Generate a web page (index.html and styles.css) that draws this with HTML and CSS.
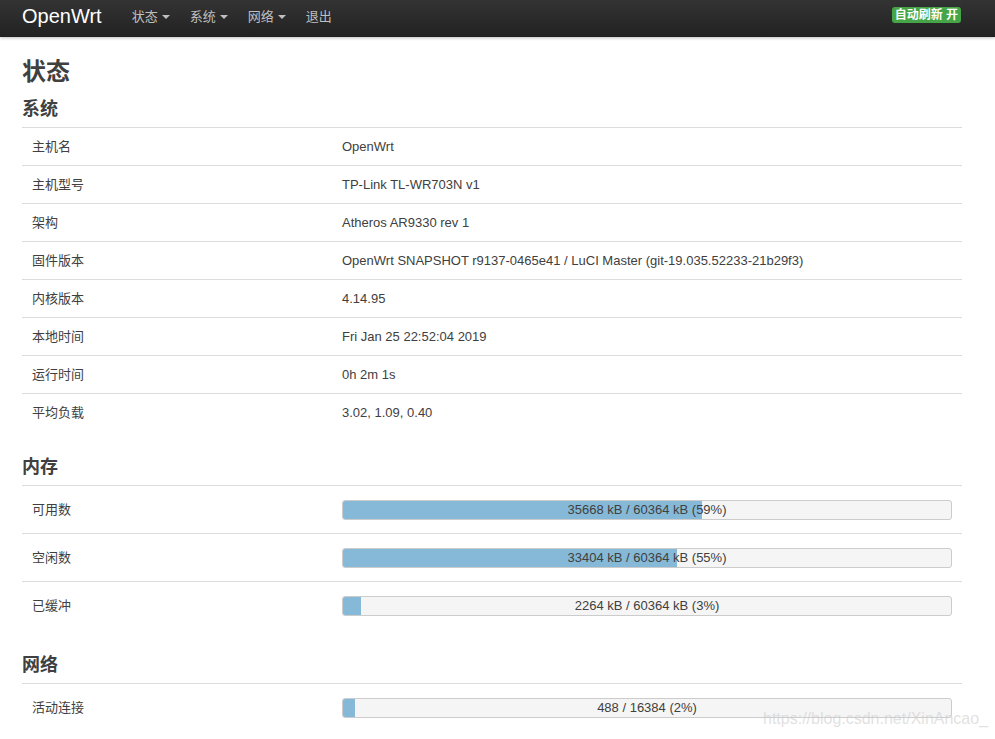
FILE: index.html
```html
<!DOCTYPE html>
<html lang="zh">
<head>
<meta charset="utf-8">
<title>OpenWrt - 状态</title>
<link rel="stylesheet" href="styles.css">
</head>
<body>
<header class="navbar">
  <div class="navbar-inner">
    <a class="brand" href="#">OpenWrt</a>
    <ul class="nav">
      <li><a href="#">状态<span class="caret"></span></a></li>
      <li><a href="#">系统<span class="caret"></span></a></li>
      <li><a href="#">网络<span class="caret"></span></a></li>
      <li><a href="#">退出</a></li>
    </ul>
    <span class="badge">自动刷新 开</span>
  </div>
</header>
<main class="main">
  <h1>状态</h1>
  <h2>系统</h2>
  <table class="info">
    <tr><td class="label">主机名</td><td>OpenWrt</td></tr>
    <tr><td class="label">主机型号</td><td>TP-Link TL-WR703N v1</td></tr>
    <tr><td class="label">架构</td><td>Atheros AR9330 rev 1</td></tr>
    <tr><td class="label">固件版本</td><td>OpenWrt SNAPSHOT r9137-0465e41 / LuCI Master (git-19.035.52233-21b29f3)</td></tr>
    <tr><td class="label">内核版本</td><td>4.14.95</td></tr>
    <tr><td class="label">本地时间</td><td>Fri Jan 25 22:52:04 2019</td></tr>
    <tr><td class="label">运行时间</td><td>0h 2m 1s</td></tr>
    <tr><td class="label">平均负载</td><td>3.02, 1.09, 0.40</td></tr>
  </table>
  <h2>内存</h2>
  <table class="info bars">
    <tr><td class="label">可用数</td><td><div class="progress"><div class="fill" style="width:59%"></div><span class="ptext">35668 kB / 60364 kB (59%)</span></div></td></tr>
    <tr><td class="label">空闲数</td><td><div class="progress"><div class="fill" style="width:55%"></div><span class="ptext">33404 kB / 60364 kB (55%)</span></div></td></tr>
    <tr><td class="label">已缓冲</td><td><div class="progress"><div class="fill" style="width:3%"></div><span class="ptext">2264 kB / 60364 kB (3%)</span></div></td></tr>
  </table>
  <h2>网络</h2>
  <table class="info bars">
    <tr><td class="label">活动连接</td><td><div class="progress"><div class="fill" style="width:2%"></div><span class="ptext">488 / 16384 (2%)</span></div></td></tr>
  </table>
</main>
<div class="watermark">https://blog.csdn.net/XinAncao_</div>
</body>
</html>
```
FILE: styles.css
```css
html, body {
  margin: 0;
  padding: 0;
  background: #fff;
}
body {
  font-family: "Liberation Sans", Arial, "Noto Sans CJK SC", sans-serif;
  font-size: 13px;
  line-height: 18px;
  color: #404040;
  overflow: hidden;
}
.navbar {
  height: 37px;
  background: linear-gradient(to bottom, #333333, #222222);
  box-shadow: 0 1px 3px rgba(0,0,0,0.25), inset 0 -1px 0 rgba(0,0,0,0.1);
}
.navbar-inner {
  width: 940px;
  margin-left: 22px;
  height: 33px;
  display: flex;
  align-items: center;
}
.brand {
  color: #ffffff;
  font-size: 20px;
  text-decoration: none;
  line-height: 28px;
  margin-right: 20px;
  margin-top: -2px;
}
.nav {
  list-style: none;
  margin: 0;
  padding: 0;
  display: flex;
}
.nav a {
  display: flex;
  align-items: center;
  padding: 0 10px;
  color: #bfbfbf;
  text-decoration: none;
  font-size: 13px;
  line-height: 30px;
}
.caret {
  display: inline-block;
  width: 0;
  height: 0;
  margin-left: 4px;
  margin-top: 1px;
  border-left: 4px solid transparent;
  border-right: 4px solid transparent;
  border-top: 4px solid #bfbfbf;
}
.badge {
  margin-left: auto;
  margin-right: 1px;
  margin-top: -4px;
  background: #46a546;
  color: #fff;
  font-weight: bold;
  font-size: 12px;
  line-height: 15px;
  padding: 1px 3px 0 3px;
  border-radius: 3px;
}
.main {
  width: 940px;
  margin-left: 22px;
}
h1 {
  font-size: 24px;
  line-height: 30px;
  font-weight: bold;
  margin: 20px 0 10px;
  color: #404040;
}
h2 {
  font-size: 18px;
  line-height: 24px;
  font-weight: bold;
  margin: 0 0 6px;
  color: #404040;
}
.info + h2 {
  margin-top: 24px;
}
.info {
  width: 100%;
  border-collapse: collapse;
  border-spacing: 0;
}
.info td {
  border-top: 1px solid #dddddd;
  padding: 10px 10px 9px;
  line-height: 18px;
  vertical-align: middle;
  text-align: left;
}
.info td.label {
  width: 290px;
}
.bars td {
  padding: 14px 10px 13px;
}
.progress {
  position: relative;
  height: 18px;
  border: 1px solid #cccccc;
  border-radius: 3px;
  background: #f5f5f5;
  overflow: hidden;
}
.fill {
  height: 100%;
  background: #86b9d7;
}
.ptext {
  position: absolute;
  left: 0;
  right: 0;
  top: 0;
  text-align: center;
  line-height: 18px;
  color: #404040;
}
.watermark {
  position: absolute;
  left: 763px;
  top: 710px;
  font-size: 16px;
  color: rgba(205,205,205,0.6);
  font-family: "Liberation Sans", Arial, sans-serif;
}
```
